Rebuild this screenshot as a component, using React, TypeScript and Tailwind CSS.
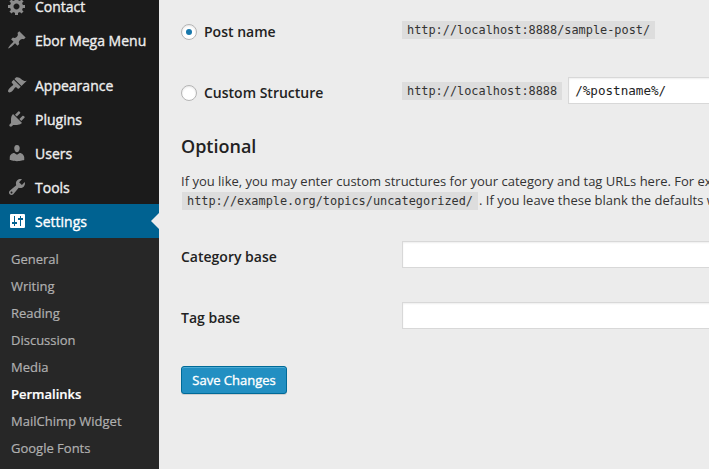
import type { ReactNode } from "react";

const icons = {
  generic:
    "M18 12h-2.18c-.17.7-.44 1.35-.81 1.93l1.54 1.54-2.1 2.1-1.54-1.54c-.58.36-1.23.63-1.91.79V19H8v-2.18c-.68-.16-1.33-.43-1.91-.79l-1.54 1.54-2.12-2.12 1.54-1.54c-.36-.58-.63-1.23-.79-1.91H1V9.03h2.17c.16-.7.44-1.35.8-1.94L2.43 5.55l2.1-2.1 1.54 1.54c.58-.37 1.24-.64 1.93-.81V2h3v2.18c.68.16 1.33.43 1.91.79l1.54-1.54 2.12 2.12-1.54 1.54c.36.59.64 1.24.8 1.94H18V12zm-8.5 1.5c1.66 0 3-1.34 3-3s-1.34-3-3-3-3 1.34-3 3 1.34 3 3 3z",
  pin: "M10.44 3.02l1.82-1.82 6.36 6.35-1.83 1.82c-1.05-.68-2.48-.57-3.41.36l-.75.75c-.92.93-1.04 2.35-.35 3.41l-1.83 1.82-2.41-2.41-2.8 2.79c-.42.42-3.38 2.71-3.8 2.29s1.86-3.39 2.28-3.81l2.79-2.79L4.1 9.36l1.83-1.82c1.05.69 2.48.57 3.4-.36l.75-.75c.93-.92 1.05-2.35.36-3.41z",
  brush:
    "M14.48 11.06L7.41 3.99l1.5-1.5c.5-.56 2.3-.47 3.51.32 1.21.8 1.43 1.28 2.91 2.1 1.18.64 2.45 1.26 4.45.85zm-.71.71L6.7 4.7 4.93 6.47c-.39.39-.39 1.02 0 1.41l1.06 1.06c.39.39.39 1.03 0 1.42-.6.6-1.43 1.11-2.21 1.69-.35.26-.7.53-1.01.84C1.43 14.23.4 16.08 1.4 17.07c.99 1 2.84-.03 4.18-1.36.31-.31.58-.66.85-1.02.57-.78 1.08-1.61 1.69-2.21.39-.39 1.02-.39 1.41 0l1.06 1.06c.39.39 1.02.39 1.41 0z",
  plug: "M13.11 4.36L9.87 7.6 8 5.73l3.24-3.24c.35-.34 1.05-.2 1.56.32.52.51.66 1.21.31 1.55zm-8 1.77l.91-1.12 9.01 9.01-1.19.84c-.71.71-2.63 1.16-3.82 1.16H6.14L4.9 17.26c-.59.59-1.54.59-2.12 0-.59-.58-.59-1.53 0-2.12l1.24-1.24v-3.88c0-1.13.4-3.19 1.09-3.89zm7.26 3.97l3.24-3.24c.34-.35 1.04-.21 1.55.31.52.51.66 1.21.31 1.55l-3.24 3.25z",
  user: "M10 9.25c-2.27 0-2.73-3.44-2.73-3.44C7 4.02 7.82 2 9.97 2c2.16 0 2.98 2.02 2.71 3.81 0 0-.41 3.44-2.68 3.44zm0 2.57L12.72 10c2.39 0 4.52 2.33 4.52 4.53v2.49s-3.65 1.13-7.24 1.13c-3.65 0-7.24-1.13-7.24-1.13v-2.49c0-2.25 1.94-4.48 4.47-4.48z",
  wrench:
    "M16.68 9.77c-1.34 1.34-3.3 1.67-4.95.99l-5.41 6.52c-.99.99-2.59.99-3.58 0s-.99-2.59 0-3.57l6.52-5.42c-.68-1.65-.35-3.61.99-4.95 1.28-1.28 3.12-1.62 4.72-1.06l-2.89 2.89 2.82 2.82 2.86-2.87c.53 1.58.18 3.39-1.08 4.65zM3.81 16.21c.4.39 1.04.39 1.43 0 .4-.4.4-1.04 0-1.43-.39-.4-1.03-.4-1.43 0-.39.39-.39 1.03 0 1.43z",
  sliders:
    "M4 3h13a1 1 0 0 1 1 1v12a1 1 0 0 1-1 1H4a1 1 0 0 1-1-1V4a1 1 0 0 1 1-1zM7 5v6H5v2h2v2h1v-2h2v-2H8V5zM13 5v2h-2v2h2v6h1V9h2V7h-2V5z",
};

function MenuItem({ icon, label, active = false }: { icon: keyof typeof icons; label: string; active?: boolean }) {
  return (
    <li className={`flex h-[34px] shrink-0 items-center pl-[7px] ${active ? "justify-between bg-[#006291] text-white" : "text-[#eee]"}`}>
      <span className="flex items-center gap-2">
        <svg viewBox="0 0 20 20" className={`size-5 shrink-0 ${active ? "text-white" : "text-[#8c8c8c]"}`}>
          <path d={icons[icon]} fill="currentColor" fillRule="evenodd" />
        </svg>
        <span className="pt-0.5 text-[14px] leading-[18px] whitespace-nowrap [-webkit-text-stroke:0.35px_currentColor]">{label}</span>
      </span>
      {active && <span className="size-0 border-y-8 border-r-8 border-y-transparent border-r-[#ececec]" />}
    </li>
  );
}

const submenu = ["General", "Writing", "Reading", "Discussion", "Media", "Permalinks", "MailChimp Widget", "Google Fonts"];

function Sidebar() {
  return (
    <nav className="flex w-[159px] shrink-0 flex-col overflow-hidden bg-[#1b1b1b]">
      <ul className="-mt-[11px]">
        <MenuItem icon="generic" label="Contact" />
        <MenuItem icon="pin" label="Ebor Mega Menu" />
      </ul>
      <ul className="mt-[11px]">
        <MenuItem icon="brush" label="Appearance" />
        <MenuItem icon="plug" label="Plugins" />
        <MenuItem icon="user" label="Users" />
        <MenuItem icon="wrench" label="Tools" />
        <MenuItem icon="sliders" label="Settings" active />
      </ul>
      <ul className="grow bg-[#272727] pt-2 pl-[11px] text-[13px]">
        {submenu.map((s) => (
          <li
            key={s}
            className={`h-[27px] leading-[27px] [-webkit-text-stroke:0.2px_currentColor] ${s === "Permalinks" ? "font-semibold text-white" : "text-[#b0b0b0]"}`}
          >
            {s}
          </li>
        ))}
      </ul>
    </nav>
  );
}

function Radio({ checked = false }: { checked?: boolean }) {
  return (
    <span className="flex size-4 items-center justify-center rounded-full border border-[#b4b4b4] bg-white shadow-[inset_0_1px_2px_rgba(0,0,0,0.1)]">
      {checked && <span className="size-1.5 rounded-full bg-[#1878ac]" />}
    </span>
  );
}

function Code({ children }: { children: ReactNode }) {
  return (
    <code className="block h-[18px] w-max bg-[#dddddd] px-[5px] font-['DejaVu_Sans_Mono',monospace] text-[11.88px] leading-[19px] whitespace-nowrap text-[#333]">
      {children}
    </code>
  );
}

export default function App() {
  return (
    <div className="flex h-[469px] w-[709px] overflow-hidden bg-[#ececec] font-['Open_Sans',sans-serif]">
      <Sidebar />
      <main className="flex min-w-0 grow flex-col overflow-hidden pl-[22px] text-[14px] text-[#222]">
        <div className="mt-[17px] flex h-[30px] shrink-0">
          <div className="flex w-[221px] shrink-0 items-center gap-[7px] font-semibold">
            <Radio checked />
            <span className="pb-0.5">Post name</span>
          </div>
          <div className="pt-1">
            <Code>http://localhost:8888/sample-post/</Code>
          </div>
        </div>
        <div className="mt-[30px] flex h-8 shrink-0">
          <div className="flex w-[221px] shrink-0 items-center gap-[7px] font-semibold">
            <Radio />
            <span className="pb-0.5">Custom Structure</span>
          </div>
          <div className="flex shrink-0 items-start">
            <div className="pt-[5px]">
              <Code>http://localhost:8888</Code>
            </div>
            <div className="ml-1.5 h-[27px] w-[200px] border border-[#d8d8d8] bg-white pl-1.5 font-['DejaVu_Sans_Mono',monospace] text-[12.6px] leading-[25px] text-[#222] shadow-[inset_0_1px_2px_rgba(0,0,0,0.07)]">
              /%postname%/
            </div>
          </div>
        </div>
        <h3 className="mt-[25px] h-6 shrink-0 text-[18px] leading-6 font-semibold">Optional</h3>
        <div className="mt-[13px] h-10 shrink-0 text-[13px] leading-5 whitespace-nowrap text-[#333]">
          <p className="h-5">If you like, you may enter custom structures for your category and tag URLs here. For example</p>
          <p className="flex h-5 items-center pl-px">
            <Code>http://example.org/topics/uncategorized/</Code>
            <span className="-mt-0.5 pl-px">. If you leave these blank the defaults will be used.</span>
          </p>
        </div>
        <div className="mt-[30px] flex h-[27px] shrink-0">
          <div className="w-[221px] shrink-0 pt-[5px] font-semibold">Category base</div>
          <div className="h-[27px] w-[350px] shrink-0 border border-[#d8d8d8] bg-white shadow-[inset_0_1px_2px_rgba(0,0,0,0.07)]" />
        </div>
        <div className="mt-[34px] flex h-[27px] shrink-0">
          <div className="w-[221px] shrink-0 pt-[5px] font-semibold">Tag base</div>
          <div className="h-[27px] w-[350px] shrink-0 border border-[#d8d8d8] bg-white shadow-[inset_0_1px_2px_rgba(0,0,0,0.07)]" />
        </div>
        <button className="mt-[37px] h-7 w-[106px] shrink-0 rounded-[3px] border border-[#006a98] bg-[#228fc2] text-[13px] leading-[26px] whitespace-nowrap text-white shadow-[inset_0_1px_0_rgba(120,200,230,0.5),0_1px_0_rgba(0,0,0,0.12)] [-webkit-text-stroke:0.35px_currentColor]">
          Save Changes
        </button>
      </main>
    </div>
  );
}
